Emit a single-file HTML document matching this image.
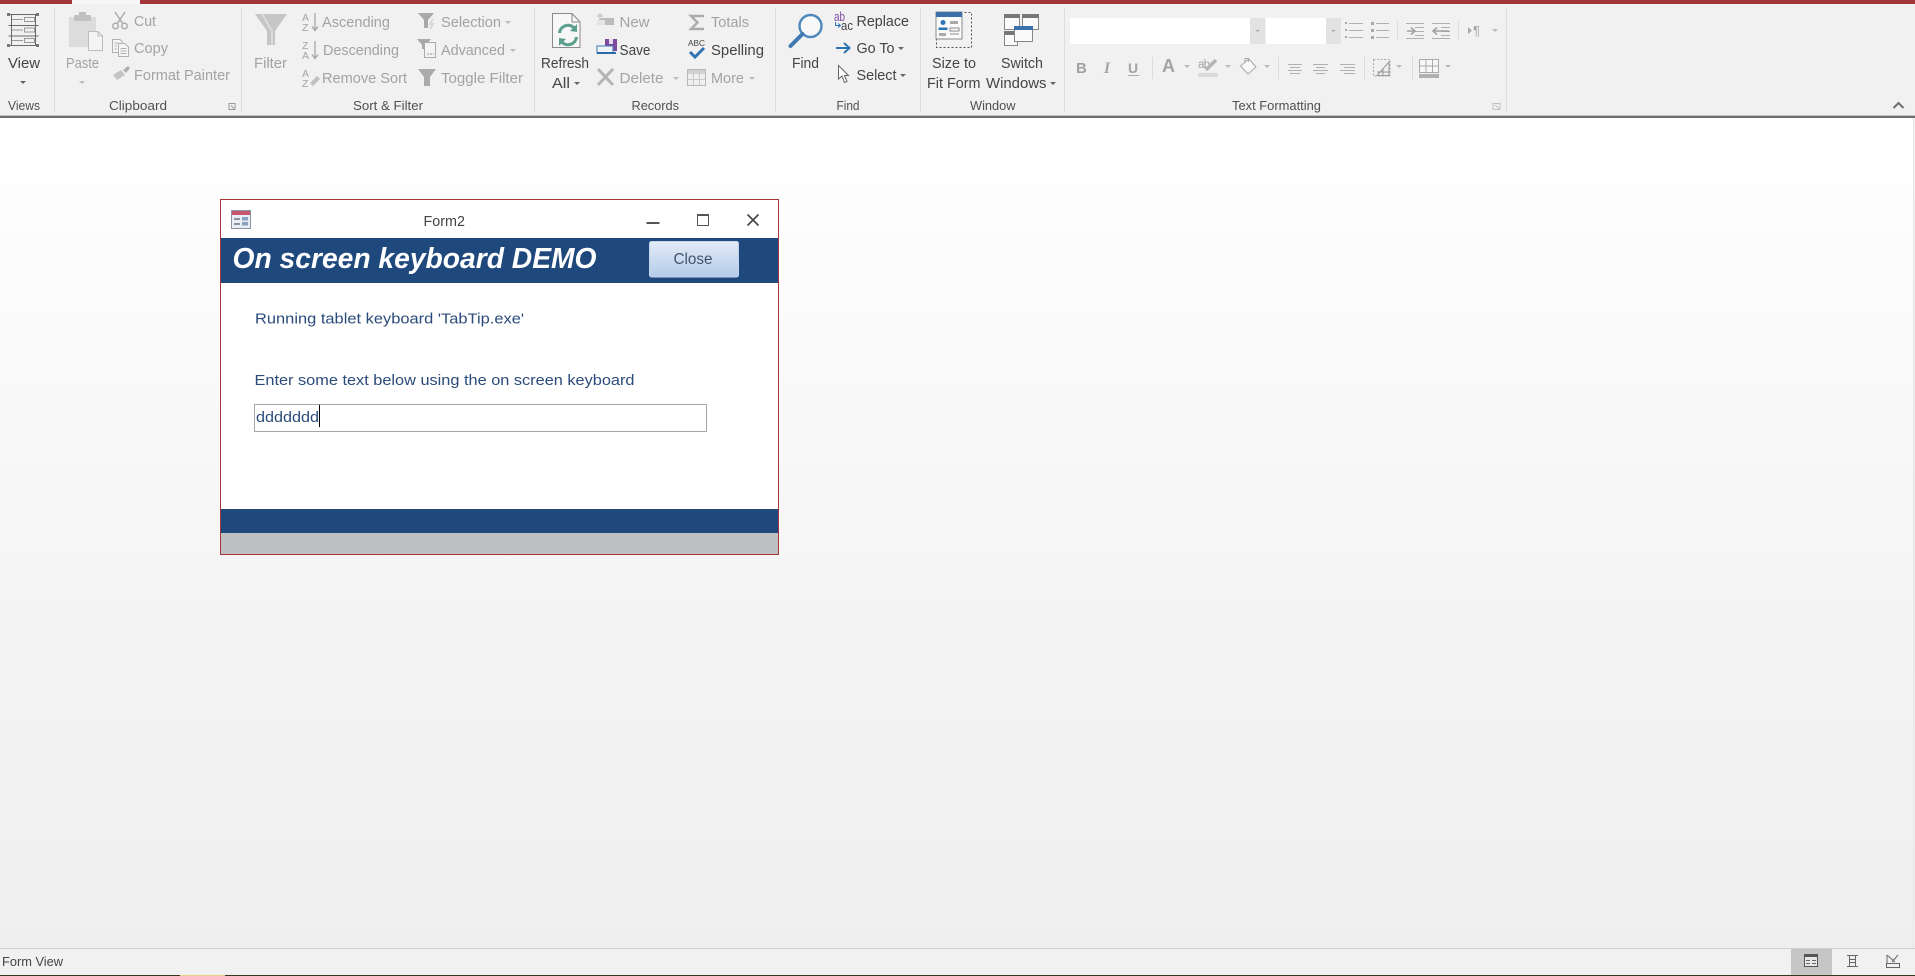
<!DOCTYPE html>
<html lang="en"><head><meta charset="utf-8"><title>Form2</title>
<style>
html,body{margin:0;padding:0;background:#fff;overflow:hidden}
svg{display:block}
text{font-family:"Liberation Sans",sans-serif;font-size:14.5px;fill:#444}
.g{fill:#a3a3a3}
.l{font-size:13.2px;fill:#505050}
.n{fill:#2b4b7a;font-size:15px}
</style></head><body>
<svg width="1915" height="976" viewBox="0 0 1915 976" xmlns="http://www.w3.org/2000/svg">
<defs>
<linearGradient id="bg" x1="0" y1="0" x2="0" y2="1"><stop offset="0" stop-color="#fff"/><stop offset=".55" stop-color="#f5f5f5"/><stop offset="1" stop-color="#efefef"/></linearGradient>
<linearGradient id="btn" x1="0" y1="0" x2="0" y2="1"><stop offset="0" stop-color="#e3ebf7"/><stop offset="1" stop-color="#b4cbea"/></linearGradient>
</defs>
<rect width="1915" height="976" fill="#f1f1f1"/>
<!-- top bar -->
<rect x="0" y="0" width="72" height="4" fill="#a4373a"/><rect x="140" y="0" width="1775" height="4" fill="#a4373a"/>
<rect x="72" y="0" width="68" height="4" fill="#f6f6f6"/>
<!-- ribbon bottom -->
<rect y="115" width="1915" height="1" fill="#c4c4c4"/><rect y="116" width="1915" height="2" fill="#6e6e6e"/>
<!-- content -->
<rect y="118" width="1913" height="830" fill="url(#bg)"/>
<rect x="1913" y="118" width="1" height="830" fill="#e6e6e6"/>
<!-- separators -->
<g fill="#dcdcdc"><rect x="54" y="8" width="1" height="104"/><rect x="241" y="8" width="1" height="104"/><rect x="534" y="8" width="1" height="104"/><rect x="775" y="8" width="1" height="104"/><rect x="920" y="8" width="1" height="104"/><rect x="1064" y="8" width="1" height="104"/><rect x="1506" y="8" width="1" height="104"/>
<rect x="1397" y="21" width="1" height="19"/><rect x="1458" y="21" width="1" height="19"/><rect x="1152" y="57" width="1" height="22"/><rect x="1278" y="57" width="1" height="22"/><rect x="1364" y="57" width="1" height="22"/><rect x="1412" y="57" width="1" height="22"/></g>

<!-- VIEW icon -->
<g fill="none" stroke="#6a6a6a" stroke-width="1">
<path d="M8.5 14.5H38.5M8.5 25.500H38.500M8.500 36H38.500M8.500 45.500H38.500M11.500 14V46M35.500 14V46"/>
<rect x="24.500" y="17.500" width="10" height="4" stroke="#999"/><rect x="24.500" y="28" width="10" height="4" stroke="#999"/><rect x="24.500" y="38.500" width="10" height="4" stroke="#999"/>
<path d="M12 19.500H23M12 30H23M12 40.500H23" stroke="#999"/></g>
<g fill="#777"><rect x="7" y="13" width="3" height="3"/><rect x="36" y="13" width="3" height="3"/><rect x="7" y="44" width="3" height="3"/><rect x="36" y="44" width="3" height="3"/></g>
<text x="8" y="68" textLength="32" lengthAdjust="spacingAndGlyphs">View</text>
<polygon points="20,81 26,81 23,84" fill="#666"/>
<text class="l" x="8" y="110" textLength="32" lengthAdjust="spacingAndGlyphs">Views</text>

<!-- Clipboard -->
<rect x="69" y="17" width="27" height="30" fill="#dcdcdc"/><rect x="74" y="15" width="17" height="6" rx="1" fill="#c0c0c0"/><rect x="79" y="12" width="7" height="4" fill="#c0c0c0"/>
<path d="M88.500 31.500H98L102.500 36V50.500H88.500Z" fill="#f4f4f4" stroke="#bdbdbd"/><path d="M98 31.500V36H102.500" fill="none" stroke="#bdbdbd"/>
<text class="g" x="66" y="68" textLength="33" lengthAdjust="spacingAndGlyphs">Paste</text>
<polygon points="79,81 85,81 82,84" fill="#bbb"/>
<g fill="none" stroke="#ababab" stroke-width="1.500"><path d="M115 12L123 24M125 12L117 24"/><circle cx="115.500" cy="26" r="2.800"/><circle cx="124.500" cy="26" r="2.800"/></g>
<text class="g" x="134" y="26" textLength="22" lengthAdjust="spacingAndGlyphs">Cut</text>
<g fill="#f5f5f5" stroke="#b0b0b0"><path d="M112.500 39.500H120L122 41.500V52.500H112.500Z"/><path d="M118.500 43.500H125L128.500 47V56.500H118.500Z"/><path d="M120.500 48.500H126.500M120.500 51H126.500M120.500 53.500H126.500M114.500 43H118M114.500 46H117M114.500 49H117" fill="none"/></g>
<text class="g" x="134" y="53" textLength="34" lengthAdjust="spacingAndGlyphs">Copy</text>
<path d="M113 75L121 70L125 75L117 80Z" fill="#c4c4c4"/><path d="M123 70L128 66L130 68L126 73Z" fill="#b0b0b0"/>
<text class="g" x="134" y="80" textLength="96" lengthAdjust="spacingAndGlyphs">Format Painter</text>
<text class="l" x="109" y="110" textLength="58" lengthAdjust="spacingAndGlyphs">Clipboard</text>
<path d="M229 103.500H235V109.500H229ZM231 105.500L234 108.500" fill="none" stroke="#9a9a9a"/>

<!-- Sort & Filter -->
<path d="M255 14H287L275 31V45H267V31Z" fill="#c6c6c6"/><path d="M262 14L272 31V45" fill="none" stroke="#dcdcdc" stroke-width="2"/>
<text class="g" x="254" y="68" textLength="33" lengthAdjust="spacingAndGlyphs">Filter</text>
<g class="g" style="font-size:9.500px;font-weight:normal">
<text class="g" x="302" y="21" style="font-size:10.500px" textLength="8">A</text><text class="g" x="302" y="31" style="font-size:10.500px" textLength="8">Z</text>
<text class="g" x="302" y="49" style="font-size:10.500px" textLength="8">Z</text><text class="g" x="302" y="59" style="font-size:10.500px" textLength="8">A</text>
<text class="g" x="302" y="77" style="font-size:10.500px" textLength="8">A</text><text class="g" x="302" y="87" style="font-size:10.500px" textLength="8">Z</text></g>
<path d="M315 13V30M312 26.500L315 30.500L318 26.500M315 41V58M312 54.500L315 58.500L318 54.500" fill="none" stroke="#a5a5a5" stroke-width="1.300"/>
<path d="M310 83L317 76L320 79L313 86Z" fill="#c0c0c0"/>
<text class="g" x="322" y="27" textLength="68" lengthAdjust="spacingAndGlyphs">Ascending</text>
<text class="g" x="323" y="55" textLength="76" lengthAdjust="spacingAndGlyphs">Descending</text>
<text class="g" x="322" y="83" textLength="85" lengthAdjust="spacingAndGlyphs">Remove Sort</text>
<path d="M418 13H434L428 20V28H424V20Z" fill="#a8a8a8"/><path d="M433 19L430 24H433L430 29" stroke="#d8d8d8" fill="none" stroke-width="2"/>
<text class="g" x="441" y="27" textLength="60" lengthAdjust="spacingAndGlyphs">Selection</text><polygon points="505,21 511,21 508,24" fill="#bbb"/>
<path d="M417 39H431L426 45V49H422V45Z" fill="#a8a8a8"/><rect x="424.500" y="42.500" width="11" height="15" fill="#f4f4f4" stroke="#aaa"/><path d="M427 54H429M430 54H432M433 54H434" stroke="#999"/>
<text class="g" x="441" y="55" textLength="64" lengthAdjust="spacingAndGlyphs">Advanced</text><polygon points="510,49 516,49 513,52" fill="#bbb"/>
<path d="M418 69H436L430 77V86H424V77Z" fill="#ababab"/>
<text class="g" x="441" y="83" textLength="82" lengthAdjust="spacingAndGlyphs">Toggle Filter</text>
<text class="l" x="353" y="110" textLength="70" lengthAdjust="spacingAndGlyphs">Sort &amp; Filter</text>

<!-- Records -->
<path d="M552.500 13.500H572L580 22V47.500H552.500Z" fill="#f7f7f7" stroke="#8a8a8a"/><path d="M572 13.500V22H580" fill="none" stroke="#8a8a8a"/>
<path d="M559.500 33A8.500 8.500 0 0 1 575 29M576.500 37A8.500 8.500 0 0 1 561 41" fill="none" stroke="#5b9f8c" stroke-width="3"/>
<polygon points="577,24 577,32 570,31" fill="#5b9f8c"/><polygon points="559,46 559,38 566,39" fill="#5b9f8c"/>
<text x="541" y="68" textLength="48" lengthAdjust="spacingAndGlyphs">Refresh</text>
<text x="552" y="88" textLength="18" lengthAdjust="spacingAndGlyphs">All</text><polygon points="574,82 580,82 577,85" fill="#666"/>
<rect x="599" y="18" width="15" height="7" fill="#bcbcbc"/><rect x="597" y="20" width="8" height="5" fill="#e4e4e4"/><path d="M600 13V19M597 16H603" stroke="#cfcfcf" stroke-width="2"/>
<text class="g" x="619.500" y="27" textLength="30" lengthAdjust="spacingAndGlyphs">New</text>
<rect x="605" y="39" width="12" height="12" fill="#7c4a9f"/><rect x="609" y="39" width="4" height="5" fill="#e6dcec"/><rect x="597" y="46" width="16" height="7" fill="#eef3fa" stroke="#3f78b0"/><rect x="597" y="52" width="19" height="2" fill="#2b6aa6"/>
<text x="619.500" y="55" textLength="31" lengthAdjust="spacingAndGlyphs">Save</text>
<path d="M598 69L613 85M613 69L598 85" stroke="#b4b4b4" stroke-width="3"/>
<text class="g" x="619.500" y="83" textLength="44" lengthAdjust="spacingAndGlyphs">Delete</text><polygon points="673,77 679,77 676,80" fill="#bbb"/>
<path d="M704 16H691L697.500 22.500L691 29H704" fill="none" stroke="#ababab" stroke-width="2.400"/>
<text class="g" x="711" y="27" textLength="38" lengthAdjust="spacingAndGlyphs">Totals</text>
<text x="688" y="46" style="font-size:8.500px;fill:#444" textLength="17" lengthAdjust="spacingAndGlyphs">ABC</text>
<path d="M690 52L695 57L704 48" fill="none" stroke="#2e74b5" stroke-width="3"/>
<text x="711" y="55" textLength="53" lengthAdjust="spacingAndGlyphs">Spelling</text>
<rect x="687.500" y="69.500" width="18" height="16" fill="#efefef" stroke="#b8b8b8"/><rect x="688" y="70" width="17" height="4" fill="#d2d2d2"/><path d="M693.500 70V85M699.500 70V85M688 79.500H705" stroke="#c8c8c8"/>
<text class="g" x="711" y="83" textLength="33" lengthAdjust="spacingAndGlyphs">More</text><polygon points="749,77 755,77 752,80" fill="#bbb"/>
<text class="l" x="631.500" y="110" textLength="47.500" lengthAdjust="spacingAndGlyphs">Records</text>

<!-- Find -->
<circle cx="810.500" cy="26" r="11" fill="#f8f8f8" stroke="#4f88bd" stroke-width="2.400"/><path d="M802.500 34L790.500 46" stroke="#3f7ab3" stroke-width="4" stroke-linecap="round"/>
<text x="792" y="68" textLength="27" lengthAdjust="spacingAndGlyphs">Find</text>
<text x="834" y="21" style="font-size:12.500px;fill:#7c4a9f" textLength="11" lengthAdjust="spacingAndGlyphs">ab</text>
<text x="841" y="30" style="font-size:12.500px;fill:#444" textLength="12" lengthAdjust="spacingAndGlyphs">ac</text>
<path d="M835.500 22V25.500H840M838 23.500L840.500 25.500L838 27.500" fill="none" stroke="#2e74b5"/>
<text x="856.500" y="26" textLength="52.500" lengthAdjust="spacingAndGlyphs">Replace</text>
<path d="M836 48H849M844 43L849.500 48L844 53" fill="none" stroke="#2e74b5" stroke-width="2"/>
<text x="856.500" y="53" textLength="38" lengthAdjust="spacingAndGlyphs">Go To</text><polygon points="898,47 904,47 901,50" fill="#666"/>
<path d="M838.500 65.500V79L842 76L844.500 82.500L847 81.500L844.500 75.500H848.500Z" fill="#fff" stroke="#666"/>
<text x="856.500" y="80" textLength="40" lengthAdjust="spacingAndGlyphs">Select</text><polygon points="900,74 906,74 903,77" fill="#666"/>
<text class="l" x="836.500" y="110" textLength="23" lengthAdjust="spacingAndGlyphs">Find</text>

<!-- Window -->
<rect x="936.500" y="12.500" width="35" height="35" fill="none" stroke="#555" stroke-dasharray="2 2"/>
<rect x="936" y="12" width="26" height="27" fill="#fafafa" stroke="#8a8a8a"/><rect x="936" y="12" width="26" height="5" fill="#3d70ab"/>
<circle cx="943" cy="22.500" r="2.500" fill="#2e74b5"/><path d="M938.500 30V27.500H947.500V30Z" fill="#2e74b5"/>
<rect x="950" y="21" width="8" height="3" fill="#aaa"/><rect x="939" y="33" width="7" height="3" fill="#aaa"/><rect x="950" y="28" width="9" height="3" fill="none" stroke="#8a8a8a"/><path d="M950 34H959" stroke="#8a8a8a"/>
<g fill="#fafafa" stroke="#888"><rect x="1004.500" y="14.500" width="15" height="15"/><rect x="1022.500" y="14.500" width="16" height="15"/><rect x="1004.500" y="31.500" width="13" height="14"/><rect x="1014.500" y="26.500" width="18" height="15"/></g>
<g fill="#777"><rect x="1004" y="14" width="16" height="4"/><rect x="1022" y="14" width="17" height="4"/><rect x="1004" y="31" width="10" height="4"/></g><rect x="1014" y="26" width="19" height="4" fill="#3d70ab"/>
<text x="932" y="68" textLength="44" lengthAdjust="spacingAndGlyphs">Size to</text>
<text x="927" y="88" textLength="53.500" lengthAdjust="spacingAndGlyphs">Fit Form</text>
<text x="1001" y="68" textLength="42" lengthAdjust="spacingAndGlyphs">Switch</text>
<text x="986" y="88" textLength="60.500" lengthAdjust="spacingAndGlyphs">Windows</text><polygon points="1050,82 1056,82 1053,85" fill="#666"/>
<text class="l" x="970" y="110" textLength="45.500" lengthAdjust="spacingAndGlyphs">Window</text>

<!-- Text Formatting -->
<rect x="1070" y="18" width="180" height="26" fill="#fff"/><rect x="1250" y="18" width="15" height="26" fill="#e2e2e2"/>
<rect x="1266" y="18" width="60" height="26" fill="#fff"/><rect x="1326" y="18" width="15" height="26" fill="#e2e2e2"/>
<polygon points="1255,30 1260,30 1257.500,32" fill="#aaa"/><polygon points="1331,30 1336,30 1333.500,32" fill="#aaa"/>
<g stroke="#b0b0b0" fill="none"><path d="M1349 23.500H1363M1349 30.500H1363M1349 37.500H1363M1376 23.500H1389M1376 30.500H1389M1376 37.500H1389"/>
<path d="M1406 23.500H1424M1415 27.500H1424M1415 31.500H1424M1415 35.500H1424M1406 38.500H1424M1432 23.500H1450M1441 27.500H1450M1441 31.500H1450M1441 35.500H1450M1432 38.500H1450"/>
<path d="M1288 64.500H1302M1290 67.500H1300M1288 70.500H1302M1290 73.500H1300M1313 64.500H1328M1316 67.500H1325M1313 70.500H1328M1316 73.500H1325M1340 64.500H1355M1344 67.500H1355M1340 70.500H1355M1344 73.500H1355"/></g>
<g fill="#aaa"><rect x="1345" y="22" width="2" height="2"/><rect x="1345" y="29" width="2" height="2"/><rect x="1345" y="36" width="2" height="2"/><rect x="1371" y="22" width="3" height="3"/><rect x="1371" y="29" width="3" height="3"/><rect x="1371" y="36" width="3" height="3"/></g>
<path d="M1407 31H1414M1411 27.500L1415 31L1411 34.500M1449 31H1434M1437 27.500L1433 31L1437 34.500" fill="none" stroke="#a0a0a0" stroke-width="1.500"/>
<polygon points="1468,27 1472,30.500 1468,34" fill="#aaa"/>
<text class="g" x="1473" y="35" style="font-size:13px" textLength="10">¶</text><polygon points="1492,29 1498,29 1495,32" fill="#bbb"/>
<text class="g" x="1076" y="73" style="font-weight:bold;font-size:15px" textLength="11">B</text>
<text class="g" x="1104" y="73" style="font-style:italic;font-family:'Liberation Serif',serif;font-weight:bold;font-size:15.500px" textLength="9">I</text>
<text class="g" x="1128" y="73" style="font-weight:bold;font-size:14px" textLength="11">U</text><rect x="1128" y="75" width="11" height="1" fill="#aaa"/>
<text class="g" x="1162" y="72" style="font-weight:bold;font-size:18px" textLength="14">A</text><polygon points="1184,65 1190,65 1187,68" fill="#bbb"/>
<text class="g" x="1198" y="68" style="font-size:11.500px" textLength="12">ab</text>
<path d="M1206 70L1216 60" stroke="#b5b5b5" stroke-width="3.500"/><rect x="1198" y="73" width="20" height="4" fill="#dadada"/><polygon points="1225,65 1231,65 1228,68" fill="#bbb"/>
<path d="M1240.500 66L1249 59L1256 67L1248 74Z" fill="#f8f8f8" stroke="#aaa"/><path d="M1245 62V58.500H1248.500V62" fill="none" stroke="#aaa"/><polygon points="1264,65 1270,65 1267,68" fill="#bbb"/>
<path d="M1373.500 59.500H1390V76M1373.500 59.500V76H1390" fill="none" stroke="#aaa" stroke-dasharray="2 1.500"/><path d="M1377 75.500L1389 62V75.500ZM1383 69V75.500M1377 72H1389" fill="#eee" stroke="#9a9a9a"/><polygon points="1396,65 1402,65 1399,68" fill="#bbb"/>
<rect x="1419.500" y="59.500" width="19" height="13" fill="#f7f7f7" stroke="#aaa"/><path d="M1426 60V72M1432.500 60V72M1420 66H1438" stroke="#aaa"/><rect x="1419" y="74" width="20" height="4" fill="#b0b0b0"/><polygon points="1445,65 1451,65 1448,68" fill="#bbb"/>
<text class="l" x="1232" y="110" textLength="89" lengthAdjust="spacingAndGlyphs">Text Formatting</text>
<path d="M1493 103.500H1500V109.500H1493ZM1495 105L1499 108.500" fill="none" stroke="#c0c0c0"/>
<path d="M1893.500 108L1898.500 103L1903.500 108" fill="none" stroke="#6e6e6e" stroke-width="2"/>

<!-- Form window -->
<rect x="220.500" y="199.500" width="558" height="355" fill="#fff" stroke="#a4373a"/>
<rect x="231.500" y="210.500" width="19" height="18" fill="#e9eef5" stroke="#8a94a6"/><rect x="232" y="211" width="18" height="4" fill="#c7556b"/><rect x="234" y="218" width="6" height="2" fill="#8a94a6"/><rect x="242" y="217" width="6" height="3.500" fill="#8aa0bf"/><rect x="234" y="223" width="6" height="2" fill="#8a94a6"/><rect x="242" y="222" width="6" height="3.500" fill="#8aa0bf"/>
<text x="423.500" y="226" textLength="41.500" lengthAdjust="spacingAndGlyphs">Form2</text>
<rect x="646.500" y="222" width="13" height="2" fill="#555"/>
<rect x="697.500" y="214.500" width="11" height="11" fill="none" stroke="#555"/><rect x="697" y="214" width="12" height="2" fill="#555"/>
<path d="M747.500 214.500L758.500 225.500M758.500 214.500L747.500 225.500" stroke="#444" stroke-width="1.600"/>
<rect x="221" y="238" width="557" height="45" fill="#1f497d"/>
<text x="232.500" y="268" style="font-weight:bold;font-style:italic;font-size:28.500px;fill:#fff" textLength="364" lengthAdjust="spacingAndGlyphs">On screen keyboard DEMO</text>
<rect x="649.500" y="241.500" width="89" height="35.500" rx="2" fill="url(#btn)" stroke="#c4d4ea"/>
<text x="673.500" y="264" style="font-size:15.500px;fill:#44546a" textLength="39" lengthAdjust="spacingAndGlyphs">Close</text>
<text class="n" x="255" y="323.500" textLength="269" lengthAdjust="spacingAndGlyphs">Running tablet keyboard 'TabTip.exe'</text>
<text class="n" x="254.500" y="385" textLength="380" lengthAdjust="spacingAndGlyphs">Enter some text below using the on screen keyboard</text>
<rect x="254.500" y="404.500" width="452" height="27" fill="#fff" stroke="#a6a6a6"/>
<text class="n" x="256" y="422" textLength="63" lengthAdjust="spacingAndGlyphs">ddddddd</text>
<rect x="319" y="405" width="1" height="22" fill="#000"/>
<rect x="221" y="509" width="557" height="24" fill="#1f497d"/>
<rect x="221" y="533" width="557" height="21" fill="#bfc0c4"/>

<!-- Status bar -->
<rect y="948" width="1915" height="1" fill="#cfcfcf"/>
<text x="2" y="966" style="font-size:13.200px" textLength="61" lengthAdjust="spacingAndGlyphs">Form View</text>
<rect x="1791" y="949" width="41" height="26" fill="#c6c6c6"/>
<rect x="1804.500" y="954.500" width="13" height="12" fill="#e8e8e8" stroke="#555"/><rect x="1804" y="954" width="14" height="3" fill="#555"/><path d="M1806 960.500H1810M1812 960.500H1816M1806 963.500H1810M1812 963.500H1816" stroke="#666"/>
<path d="M1847 955.500H1858M1849.500 955.500V966.500M1855.500 955.500V966.500M1847 966.500H1858M1850 959.500H1855M1850 962.500H1855" fill="none" stroke="#666"/>
<path d="M1887 955V963M1887 955L1895 962M1898 955L1892 962" fill="none" stroke="#666"/><rect x="1886.500" y="963.500" width="13" height="4" fill="none" stroke="#666"/>
<rect y="975" width="1915" height="1" fill="#3a3225"/><rect x="180" y="975" width="45" height="1" fill="#e6cd88"/>
</svg>
</body></html>
